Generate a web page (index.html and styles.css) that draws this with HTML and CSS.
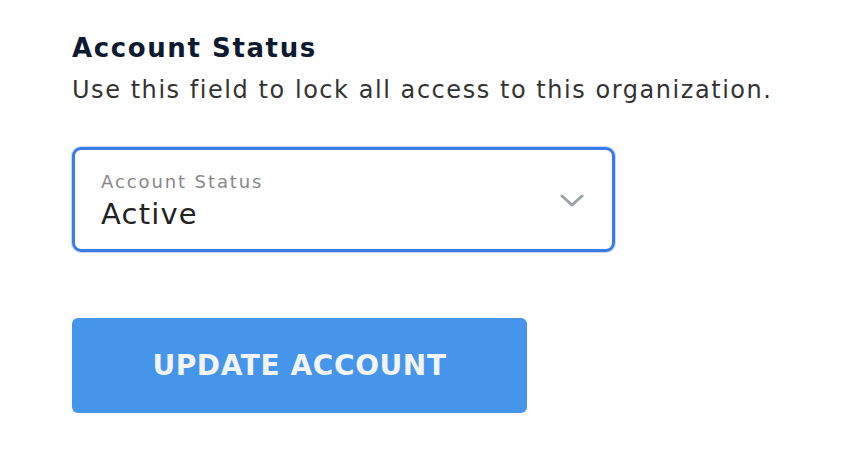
FILE: index.html
```html
<!DOCTYPE html>
<html>
<head>
<meta charset="utf-8">
<link rel="stylesheet" href="styles.css">
</head>
<body>
<div class="page">
  <h2 class="title">Account Status</h2>
  <p class="desc">Use this field to lock all access to this organization.</p>
  <div class="select">
    <div class="select-text">
      <div class="select-label">Account Status</div>
      <div class="select-value">Active</div>
    </div>
    <svg class="chev" width="24" height="14" viewBox="0 0 24 14"><path d="M2 2 L12 11 L22 2" fill="none" stroke="#9aa1ab" stroke-width="3" stroke-linecap="round" stroke-linejoin="round"/></svg>
  </div>
  <button class="btn">UPDATE ACCOUNT</button>
</div>
</body>
</html>
```
FILE: styles.css
```css
html, body { margin: 0; padding: 0; background: #fff; }
body { font-family: "DejaVu Sans", sans-serif; }
.page { padding: 30px 0 0 72px; display: flex; flex-direction: column; align-items: flex-start; }
.title { margin: 0; font-size: 26px; line-height: 36px; font-weight: 600; color: #0e1a32; letter-spacing: 1.6px; }
.desc { margin: 9px 0 0 0; font-size: 24px; line-height: 30px; color: #333; letter-spacing: 1.55px; }
.select { box-sizing: border-box; margin-top: 42px; width: 543px; height: 105px; border: 3px solid #3a7be6; border-radius: 9px; box-shadow: 0 0 0 1px rgba(58,123,230,0.3); display: flex; align-items: center; justify-content: space-between; padding: 0 28px 0 26px; }
.select-text { display: flex; flex-direction: column; margin-top: 4px; }
.select-label { font-size: 18px; line-height: 22px; color: #888; letter-spacing: 1.9px; margin-top: -1px; }
.select-value { font-size: 29px; line-height: 36px; color: #222; letter-spacing: 1.2px; margin-top: 3px; }
.chev { margin-top: 3px; }
.btn { margin-top: 66px; width: 455px; height: 95px; border: none; border-radius: 6px; background: #4596ea; color: #f3f4f6; font-family: "DejaVu Sans", sans-serif; font-weight: 700; font-size: 28px; letter-spacing: 0.6px; padding: 0; }
```
